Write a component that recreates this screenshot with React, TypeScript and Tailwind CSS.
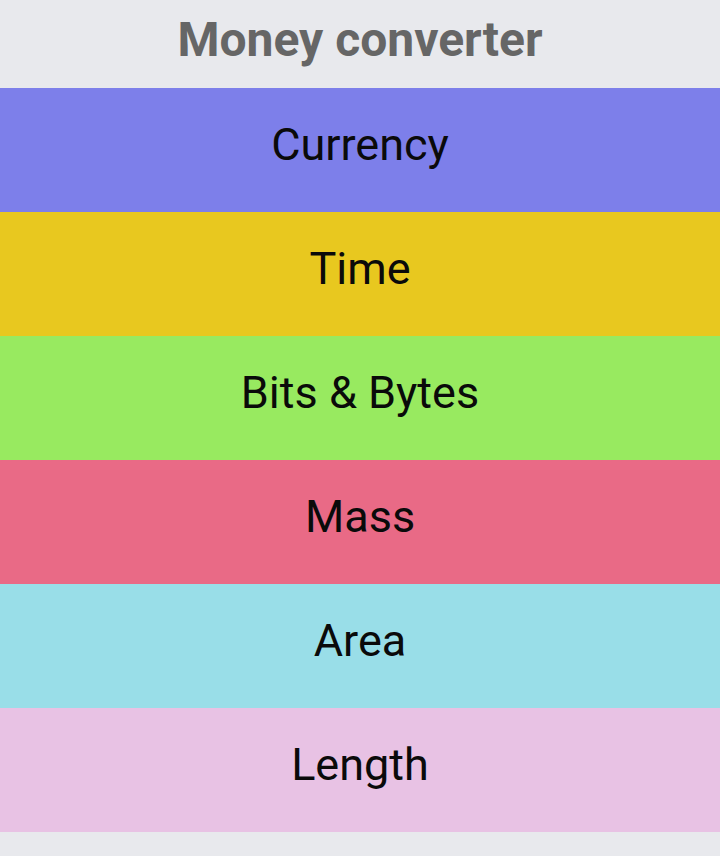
import React from "react";

const items = [
  { label: "Currency", cls: "bg-[#7d7fea]" },
  { label: "Time", cls: "bg-[#e8c81f]" },
  { label: "Bits & Bytes", cls: "bg-[#98ea60]" },
  { label: "Mass", cls: "bg-[#e96a86]" },
  { label: "Area", cls: "bg-[#99dee8]" },
  { label: "Length", cls: "bg-[#e8c2e4]" },
];

export default function App() {
  return (
    <div className="min-h-[856px] bg-[#e8e9ed] font-['Roboto',sans-serif]">
      <div className="h-[88px] flex items-center justify-center pb-2">
        <h1 className="text-[48px] font-bold text-[#666666] leading-none">Money converter</h1>
      </div>
      <div className="flex flex-col">
        {items.map((it) => (
          <div key={it.label} className={`h-[124px] flex items-center justify-center pb-3 ${it.cls}`}>
            <span className="text-[45px] text-[#0a0a0a] leading-none">{it.label}</span>
          </div>
        ))}
      </div>
    </div>
  );
}
